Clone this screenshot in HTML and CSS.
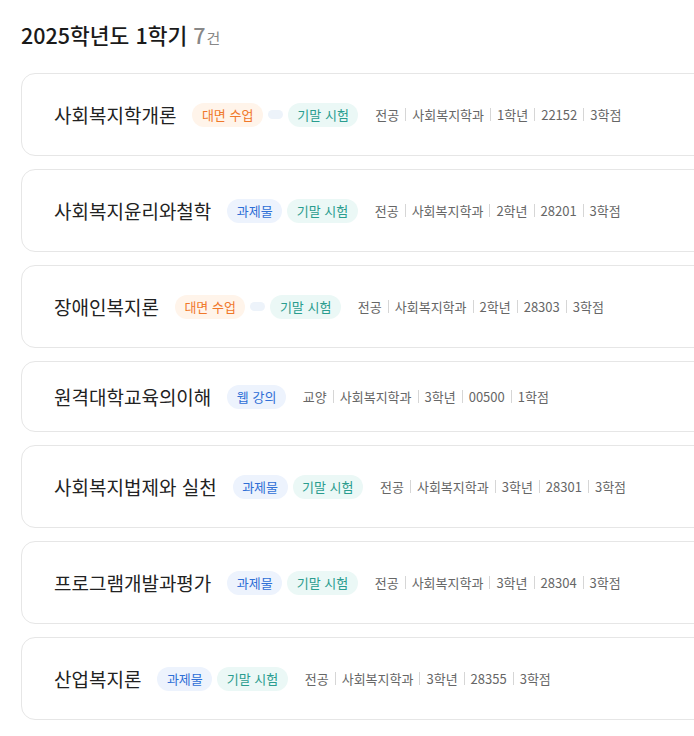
FILE: index.html
```html
<!DOCTYPE html>
<html lang="ko">
<head>
  <meta charset="UTF-8" />
  <title>2025학년도 1학기</title>
  <link rel="stylesheet" href="styles.css">
</head>
<body>
  <h2 class="term">2025학년도 1학기 <span class="count">7<small>건</small></span></h2>

  <div class="list">
    <div class="card">
      <span class="name">사회복지학개론</span>
      <span class="badge orange">대면 수업</span>
      <span class="badge empty"></span>
      <span class="badge teal">기말 시험</span>
      <span class="meta">전공<i></i>사회복지학과<i></i>1학년<i></i>22152<i></i>3학점</span>
    </div>

    <div class="card">
      <span class="name">사회복지윤리와철학</span>
      <span class="badge blue">과제물</span>
      <span class="badge teal">기말 시험</span>
      <span class="meta">전공<i></i>사회복지학과<i></i>2학년<i></i>28201<i></i>3학점</span>
    </div>

    <div class="card">
      <span class="name">장애인복지론</span>
      <span class="badge orange">대면 수업</span>
      <span class="badge empty"></span>
      <span class="badge teal">기말 시험</span>
      <span class="meta">전공<i></i>사회복지학과<i></i>2학년<i></i>28303<i></i>3학점</span>
    </div>

    <div class="card short">
      <span class="name">원격대학교육의이해</span>
      <span class="badge blue">웹 강의</span>
      <span class="meta">교양<i></i>사회복지학과<i></i>3학년<i></i>00500<i></i>1학점</span>
    </div>

    <div class="card">
      <span class="name">사회복지법제와 실천</span>
      <span class="badge blue">과제물</span>
      <span class="badge teal">기말 시험</span>
      <span class="meta">전공<i></i>사회복지학과<i></i>3학년<i></i>28301<i></i>3학점</span>
    </div>

    <div class="card">
      <span class="name">프로그램개발과평가</span>
      <span class="badge blue">과제물</span>
      <span class="badge teal">기말 시험</span>
      <span class="meta">전공<i></i>사회복지학과<i></i>3학년<i></i>28304<i></i>3학점</span>
    </div>

    <div class="card">
      <span class="name">산업복지론</span>
      <span class="badge blue">과제물</span>
      <span class="badge teal">기말 시험</span>
      <span class="meta">전공<i></i>사회복지학과<i></i>3학년<i></i>28355<i></i>3학점</span>
    </div>
  </div>
</body>
</html>
```

FILE: styles.css
```css
html {
  overflow: hidden;
}
body {
  margin: 0;
  padding: 21px 21px;
  font-family: "Noto Sans CJK KR", "Noto Sans", sans-serif;
  color: #222;
  background: #fff;
}
.term {
  margin: 0 0 21px;
  font-size: 21.5px;
  line-height: 28px;
  font-weight: 500;
  color: #1a1a1a;
}
.count {
  color: #888;
}
.count small {
  font-size: 15px;
  font-weight: 400;
  margin-left: 1px;
}
.list {
  width: 760px;
  display: flex;
  flex-direction: column;
  gap: 13px;
}
.card {
  box-sizing: border-box;
  height: 83px;
  display: flex;
  align-items: center;
  padding: 0 32px;
  border: 1px solid #e6e6e6;
  border-radius: 14px;
  background: #fff;
}
.card.short {
  height: 71px;
}
.name {
  font-size: 19px;
  color: #222;
  margin-right: 16px;
}
.badge {
  display: inline-flex;
  align-items: center;
  height: 24px;
  padding: 0 9.5px;
  margin-right: 5px;
  border-radius: 12px;
  font-size: 13px;
}
.badge.orange {
  color: #f0782a;
  background: #fff4ea;
}
.badge.teal {
  color: #2a9d8f;
  background: #ebf8f6;
}
.badge.blue {
  color: #2f6fd6;
  background: #edf3fd;
}
.badge.empty {
  height: 9px;
  width: 15px;
  padding: 0;
  border-radius: 5px;
  background: #edf3fa;
}
.meta {
  margin-left: 12px;
  font-size: 13px;
  color: #666;
  display: flex;
  align-items: center;
}
.meta i {
  display: inline-block;
  width: 1px;
  height: 13px;
  margin: 0 6px;
  background: #d6d6d6;
}
```
